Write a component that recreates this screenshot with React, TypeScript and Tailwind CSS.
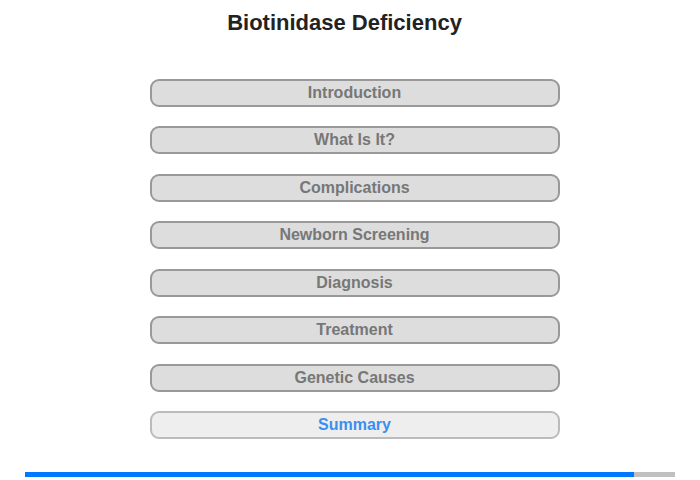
import React from "react";

const sections = [
  "Introduction",
  "What Is It?",
  "Complications",
  "Newborn Screening",
  "Diagnosis",
  "Treatment",
  "Genetic Causes",
];

export default function App() {
  return (
    <div className="w-[700px] h-[480px] bg-white font-['Liberation_Sans',Arial,sans-serif] flex flex-col items-center">
      <h1 className="mt-[10px] mr-[11px] text-[22px] leading-[26px] font-bold text-[#222]">Biotinidase Deficiency</h1>
      <div className="mt-[43px] ml-[9px] flex flex-col gap-[19.43px] w-[410px]">
        {sections.map((s) => (
          <button
            key={s}
            className="h-[28px] rounded-[9px] border-2 border-[#999] bg-[#ddd] text-[16px] font-bold text-[#777] leading-[24px]"
          >
            {s}
          </button>
        ))}
        <button className="h-[28px] rounded-[9px] border-2 border-[#bbb] bg-[#eee] text-[16px] font-bold text-[#3b8ff0] leading-[24px]">
          Summary
        </button>
      </div>
      <div className="mt-[33px] w-[650px] h-[5px] bg-[#c0c0c0] flex">
        <div className="w-[609px] h-full bg-[#0077ff]" />
      </div>
    </div>
  );
}
